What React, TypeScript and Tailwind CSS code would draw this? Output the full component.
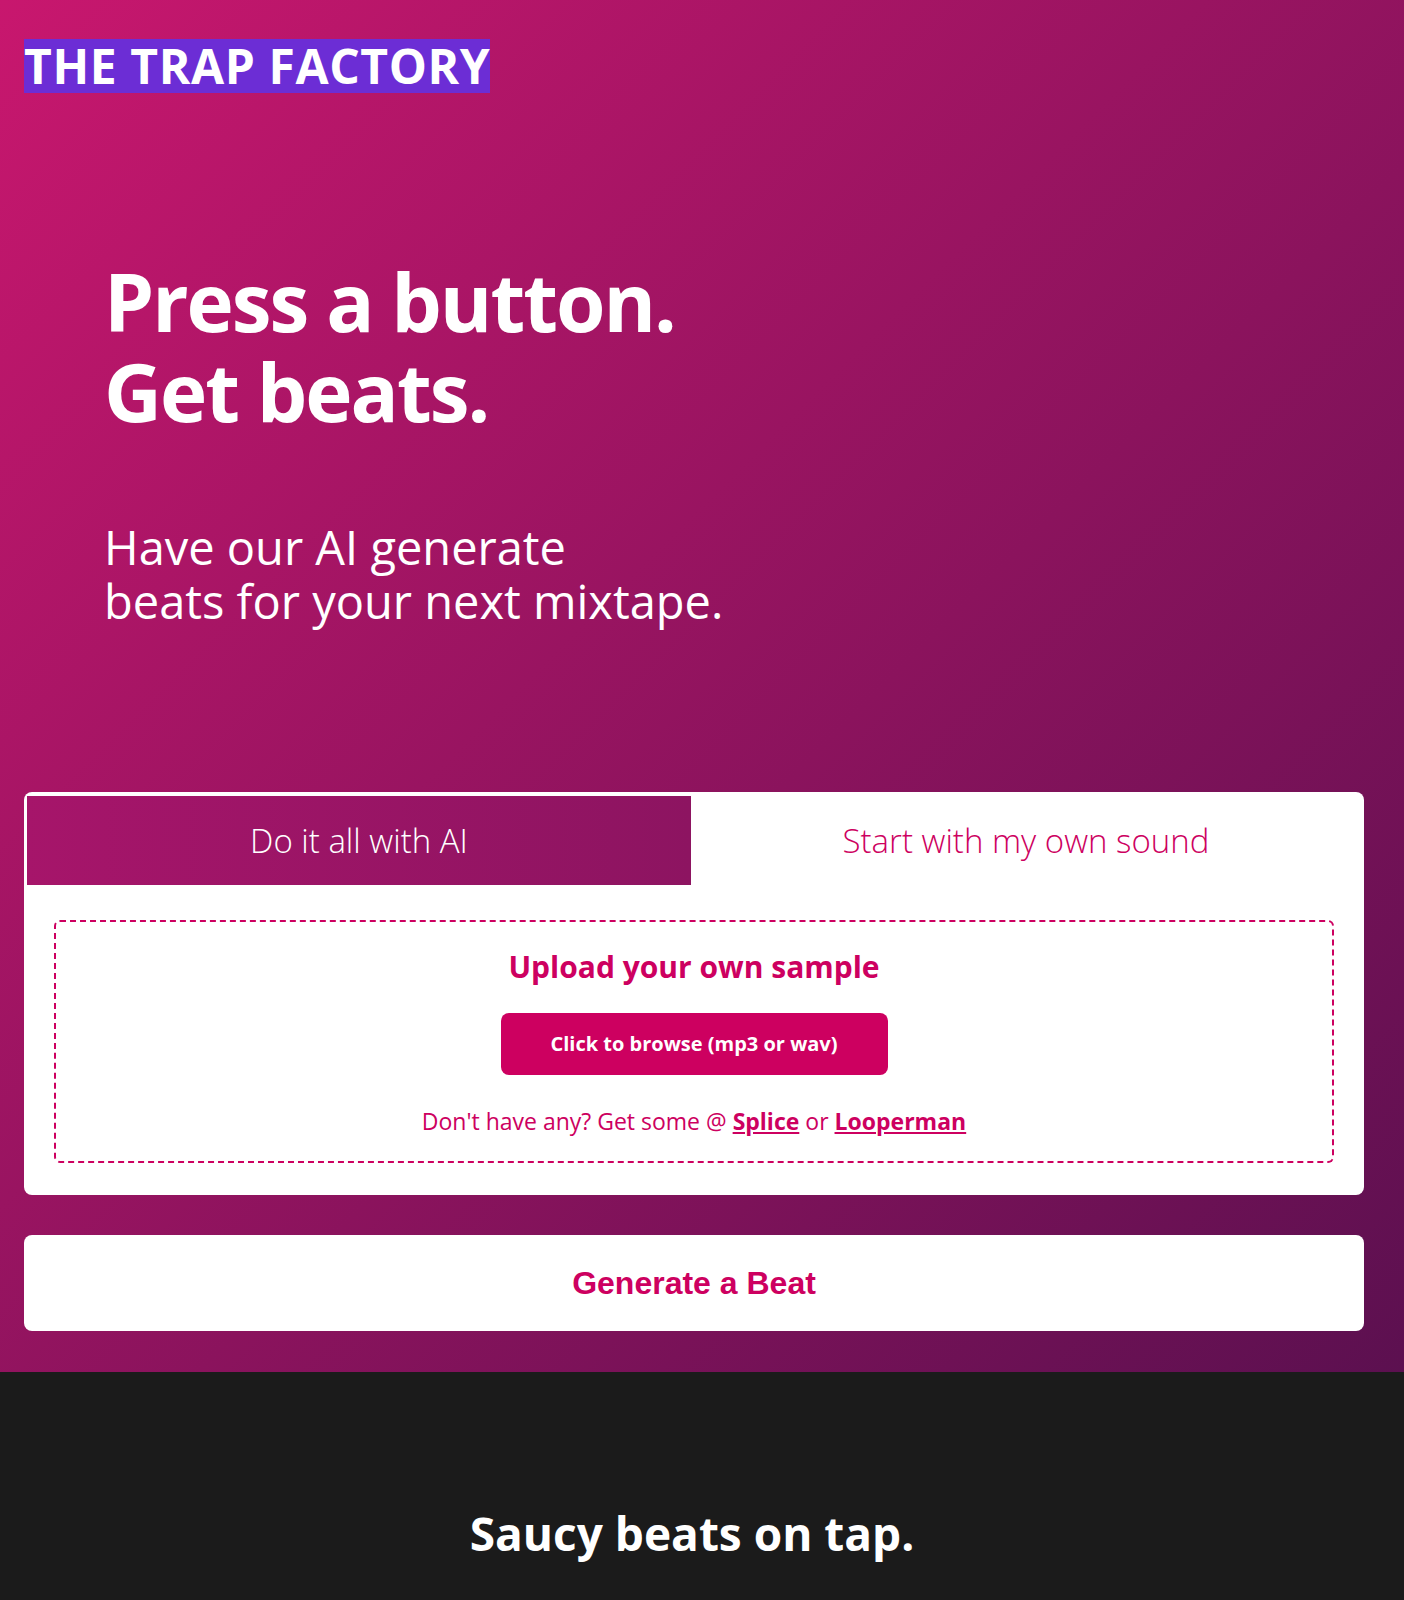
const pink = "text-[#cd0060]";

const Tabs = () => (
  <div className="flex h-[89px]">
    <button className="flex w-[664px] items-center justify-center bg-[linear-gradient(90deg,#a6156a,#8d1461)] text-[33px] font-light text-white">
      Do it all with AI
    </button>
    <button className={`flex flex-1 items-center justify-center bg-white text-[33px] font-light ${pink}`}>
      Start with my own sound
    </button>
  </div>
);

const UploadBox = () => (
  <div className="mx-[27px] mb-[29px] mt-[35px] flex flex-col items-center rounded-md border-2 border-dashed border-[#cd0060] pb-[25px] pt-[27px]">
    <h3 className={`text-[30px] font-bold leading-[36px] ${pink}`}>
      Upload your own sample
    </h3>
    <button className="mt-[28px] h-[62px] w-[387px] rounded-lg bg-[#cd0060] text-[20px] font-bold text-white">
      Click to browse (mp3 or wav)
    </button>
    <p className={`mt-[31px] text-[23px] leading-[30px] ${pink}`}>
      Don't have any? Get some @{" "}
      <a href="#" className="font-bold underline">
        Splice
      </a>{" "}
      or{" "}
      <a href="#" className="font-bold underline">
        Looperman
      </a>
    </p>
  </div>
);

export default function App() {
  return (
    <div className="min-h-screen bg-[#1b1b1b] font-['Open_Sans',sans-serif]">
      <section className="bg-[linear-gradient(135deg,#c8176e_0%,#5c1050_100%)] pb-[41px]">
        <header className="pl-6 pt-[39px]">
          <div className="w-fit bg-[#6c2dd5] text-[48px] font-bold leading-[54px] tracking-[0.6px] text-white">
            THE TRAP FACTORY
          </div>
        </header>

        <div className="pl-[104px] pt-[163px] text-white">
          <h1 className="text-[80px] font-bold leading-[90px] tracking-[-2px]">
            Press a button.
            <br />
            Get beats.
          </h1>
          <p className="pt-[84px] text-[47px] leading-[54px]">
            Have our AI generate
            <br />
            beats for your next mixtape.
          </p>
        </div>

        <div className="px-6 pt-[164px]">
          <div className="w-[1340px] rounded-lg bg-white px-[3px] pb-[3px] pt-1">
            <Tabs />
            <UploadBox />
          </div>
          <button
            className={`mt-10 h-24 w-[1340px] rounded-lg bg-white font-['Liberation_Sans',Arial,sans-serif] text-[32px] font-bold ${pink}`}
          >
            Generate a Beat
          </button>
        </div>
      </section>

      <section className="flex justify-center pb-10 pr-[20px] pt-[131px]">
        <h2 className="text-[46px] font-bold leading-[60px] text-white">
          Saucy beats on tap.
        </h2>
      </section>
    </div>
  );
}
